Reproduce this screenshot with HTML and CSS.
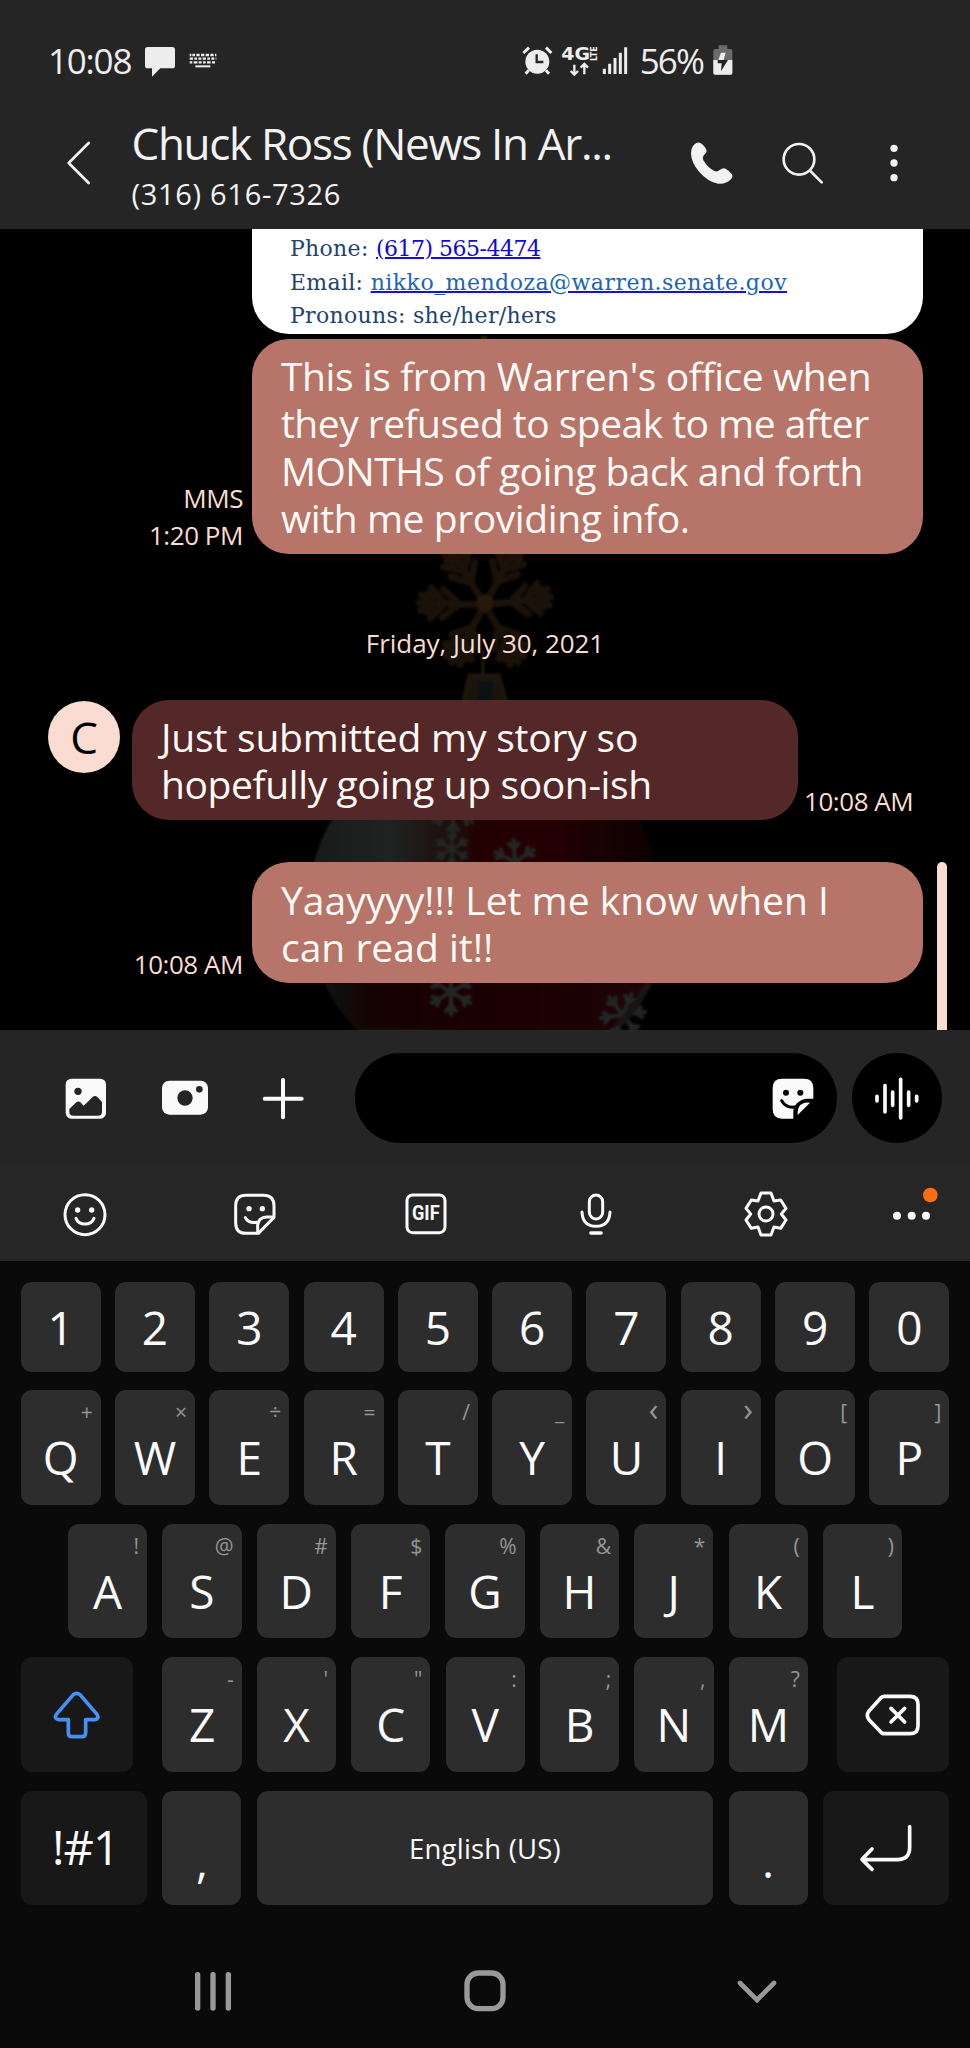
FILE: index.html
```html
<!DOCTYPE html>
<html lang="en">
<head>
<meta charset="utf-8">
<title>Messages</title>
<link rel="stylesheet" href="styles.css">
</head>
<body>
<div class="phone">
  <div class="status">
    <span class="time">10:08</span>
    <svg class="s-chat" width="30" height="40" viewBox="435 120 90 120"><path d="M443 141H517Q525 141 525 149V197Q525 205 517 205H481L456 230V205H443Q435 205 435 197V149Q435 141 443 141Z" fill="#ededed"/></svg>
    <svg class="s-kb" width="28" height="40" viewBox="566 120 84 120"><g stroke="#ededed" stroke-width="7" fill="none"><path d="M568 165H648" stroke-dasharray="5 3 8 4 10 4 10 4 10 4 10 4"/><path d="M568 176H648" stroke-dasharray="10 4 8 4 9 4"/><path d="M568 187H648" stroke-dasharray="8 4 11 4 9 4"/><path d="M585 199H630" stroke-width="6"/></g></svg>
    <svg class="s-net" width="107" height="40" viewBox="110 120 321 120">
      <g fill="none" stroke="#ededed">
        <circle cx="156" cy="185" r="36" fill="#ededed" stroke="none"/>
        <path d="M114 159L131 143M182 143L198 159" stroke-width="9"/>
        <path d="M130 211L121 221M182 211L191 221" stroke-width="9"/>
        <path d="M154 163V186H174" stroke="#252525" stroke-width="7"/>
        <path d="M267 194V221M256 213L267 224L278 213M297 223V194M286 203L297 192L308 203" stroke-width="7"/>
        <g stroke-width="9"><path d="M357 206V222M373 191V222M389 174V222M405 158V222M421 142V222"/></g>
      </g>
      <text class="g4" x="228" y="181" textLength="86" lengthAdjust="spacingAndGlyphs">4G</text>
      <text class="lte" transform="translate(334 183) rotate(-90)" textLength="44" lengthAdjust="spacingAndGlyphs">LTE</text>
    </svg>
    <span class="pct">56%</span>
    <svg width="20" height="40" viewBox="683 120 60 120"><path d="M700 136H726V147H736Q741 147 741 152V219Q741 224 736 224H689Q684 224 684 219V152Q684 147 689 147H700Z" fill="#6b6b6b"/><path d="M684 180H741V219Q741 224 736 224H689Q684 224 684 219Z" fill="#ededed"/><path d="M707 158H721L715 180H699Z" fill="#ededed"/><path d="M697 180H728L707 214L709 190H697Z" fill="#252525"/></svg>
  </div>

  <div class="header">
    <svg class="back" width="28" height="47" viewBox="193 420 84 141"><path d="M264 429L204 489L264 549" fill="none" stroke="#f2f2f2" stroke-width="8" stroke-linecap="round" stroke-linejoin="round"/></svg>
    <div class="who"><div class="name">Chuck Ross (News In Ar...</div><div class="num">(316) 616-7326</div></div>
    <svg class="call" width="44" height="47" viewBox="615 420 132 141"><path d="M627 434Q640 422 651 432Q660 440 664 449Q667 455 659 463Q650 472 656 482Q668 502 688 513Q697 517 704 510Q714 502 722 506Q734 513 741 523Q745 530 738 538Q722 554 699 551Q669 546 643 516Q619 488 618 461Q618 444 627 434Z" fill="#f2f2f2"/></svg>
    <svg class="find" width="44" height="47" viewBox="890 420 132 141"><g fill="none" stroke="#f2f2f2" stroke-width="8" stroke-linecap="round"><circle cx="944" cy="478" r="46"/><path d="M978 513L1012 547"/></g></svg>
    <svg class="more" width="12" height="47" viewBox="1209 420 36 141"><g fill="#f2f2f2"><circle cx="1227" cy="445" r="11"/><circle cx="1227" cy="489" r="11"/><circle cx="1227" cy="533" r="11"/></g></svg>
  </div>

  <div class="chat">
    <svg class="wall" width="970" height="801" viewBox="0 229 970 801">
      <defs>
        <linearGradient id="ball" x1="310" y1="0" x2="662" y2="0" gradientUnits="userSpaceOnUse"><stop offset="0" stop-color="#191b1b"/><stop offset=".22" stop-color="#202222"/><stop offset=".4" stop-color="#1d100d"/><stop offset=".48" stop-color="#220101"/><stop offset=".68" stop-color="#250003"/><stop offset=".82" stop-color="#180204"/><stop offset="1" stop-color="#0a0102"/></linearGradient>
        <linearGradient id="low" x1="330" y1="0" x2="650" y2="0" gradientUnits="userSpaceOnUse"><stop offset="0" stop-color="#101010"/><stop offset=".12" stop-color="#150303"/><stop offset=".6" stop-color="#1d0002"/><stop offset="1" stop-color="#1d0508"/></linearGradient>
        <clipPath id="bottom"><rect x="300" y="930" width="380" height="100"/></clipPath>
        <filter id="soft" x="-10%" y="-10%" width="120%" height="120%" color-interpolation-filters="sRGB"><feGaussianBlur stdDeviation="1.3"/></filter>
        <g id="flake" fill="none" stroke="#232626" stroke-width="4"><g id="arm"><path d="M0 0V-24M-6 -20L0 -13L6 -20"/></g><use href="#arm" transform="rotate(60)"/><use href="#arm" transform="rotate(120)"/><use href="#arm" transform="rotate(180)"/><use href="#arm" transform="rotate(240)"/><use href="#arm" transform="rotate(300)"/></g>
        <g id="twig" fill="none" stroke-linecap="round"><path d="M0 0V-66M0 -40L-15 -54M0 -40L15 -54M0 -52L-8 -64M0 -52L8 -64M0 -26L-14 -42M0 -26L14 -42M-7 -46L-9 -58M7 -46L9 -58"/></g>
      </defs>
      <g filter="url(#soft)">
        <g transform="translate(485 605)" stroke="#1a1109" stroke-width="7"><use href="#twig" transform="rotate(28)"/><use href="#twig" transform="rotate(-32)"/><use href="#twig" transform="rotate(83)"/><use href="#twig" transform="rotate(-88)"/><use href="#twig" transform="rotate(150)"/><use href="#twig" transform="rotate(-150)"/></g>
        <path d="M484 336V345" stroke="#2a2308" stroke-width="7"/>
        <circle cx="485" cy="603" r="9" fill="#26180a"/>
        <path d="M483 650V674M469 675H499L507 702H463Z" stroke="#20180c" stroke-width="3" fill="#1b140b"/>
        <rect x="478" y="681" width="15" height="19" fill="#0a1213"/>
        <circle cx="485" cy="908" r="177" fill="url(#ball)"/>
        <circle cx="485" cy="908" r="177" fill="url(#low)" clip-path="url(#bottom)"/>
        <use href="#flake" transform="translate(453 811)"/><use href="#flake" transform="translate(452 849) scale(.75)"/>
        <use href="#flake" transform="translate(515 862) rotate(-4)"/>
        <use href="#flake" transform="translate(451 992)"/>
        <use href="#flake" transform="translate(623 1015) rotate(22)"/>
        <path d="M654 970Q642 1002 618 1026" stroke="#1b1415" stroke-width="7" fill="none"/>
      </g>
    </svg>

    <div class="row out">
      <div class="card">
        <div class="l1">Phone: <a class="tel">(617) 565-4474</a></div>
        <div class="l2">Email: <a class="mail">nikko_mendoza@warren.senate.gov</a></div>
        <div class="l3">Pronouns: she/her/hers</div>
      </div>
    </div>
    <div class="row out r1">
      <div class="meta">MMS<br>1:20 PM</div>
      <div class="bubble sent"><div class="snug1">This is from Warren's office when</div><div class="snug2">they refused to speak to me after</div><div class="snug2">MONTHS of going back and forth</div><div class="snug1">with me providing info.</div></div>
    </div>
    <div class="date">Friday, July 30, 2021</div>
    <div class="row in">
      <div class="avatar">C</div>
      <div class="bubble two got"><div class="loose">Just submitted my story so</div><div>hopefully going up soon-ish</div></div>
      <div class="meta left">10:08 AM</div>
    </div>
    <div class="row out r3">
      <div class="meta">10:08 AM</div>
      <div class="bubble two sent wide"><div>Yaayyyy!!! Let me know when I</div><div>can read it!!</div></div>
    </div>
    <div class="scroll"></div>
  </div>

  <div class="composer">
    <svg class="c-img" width="42" height="50" viewBox="195 160 126 150"><rect x="197" y="177" width="121" height="120" rx="17" fill="#fafafa"/><circle cx="234" cy="215" r="11" fill="#252525"/><path d="M208 268L229 248Q235 243 241 248L251 258L278 232Q285 226 292 232L306 247V276Q306 288 294 288H220Q208 288 208 276Z" fill="#252525"/></svg>
    <svg class="c-cam" width="48" height="50" viewBox="482 160 144 150"><rect x="485" y="183" width="138" height="102" rx="22" fill="#fafafa"/><circle cx="554" cy="235" r="23" fill="#252525"/><circle cx="597" cy="209" r="10" fill="#252525"/></svg>
    <svg class="c-add" width="42" height="50" viewBox="787 160 126 150"><path d="M795 237H906M850 181V293" stroke="#fafafa" stroke-width="12" stroke-linecap="round"/></svg>
    <div class="input">
      <svg width="42" height="50" viewBox="860 160 126 150"><path d="M890 177H956Q984 177 984 205V237H968Q947 237 935 251Q924 262 924 277V297H890Q862 297 862 269V205Q862 177 890 177Z" fill="#fafafa"/><circle cx="902" cy="219" r="9"/><circle cx="945" cy="219" r="9"/><path d="M889 243Q904 268 934 261" fill="none" stroke="#000" stroke-width="9" stroke-linecap="round"/><path d="M974 249Q957 247 945 256Q936 265 937 286Z" fill="#fafafa"/></svg>
    </div>
    <div class="voice"><svg width="46" height="50" viewBox="1167 160 138 150"><path d="M1176 230V244M1200 198V277M1223 217V257M1247 179V295M1271 217V257M1295 230V244" stroke="#fafafa" stroke-width="11" stroke-linecap="round"/></svg></div>
  </div>

  <div class="tools">
    <svg width="46" height="54" viewBox="187 500 138 162"><g fill="none" stroke="#fafafa" stroke-width="9" stroke-linecap="round"><circle cx="256" cy="583" r="60"/><path d="M229 594Q236 611 256 611Q276 611 283 594"/></g><circle cx="234" cy="569" r="8" fill="#fafafa"/><circle cx="276" cy="569" r="8" fill="#fafafa"/></svg>
    <svg width="46" height="54" viewBox="697 500 138 162"><g fill="none" stroke="#fafafa" stroke-width="9" stroke-linecap="round" stroke-linejoin="round"><path d="M739 525H791Q823 525 823 557V591L776 639H739Q708 639 708 607V557Q708 525 739 525Z"/><path d="M774 637V614Q777 591 801 590H821M737 592Q747 610 771 606"/></g><circle cx="748" cy="565" r="8" fill="#fafafa"/><circle cx="788" cy="565" r="8" fill="#fafafa"/></svg>
    <svg width="46" height="54" viewBox="1208 500 138 162"><rect x="1220" y="524" width="114" height="113" rx="17" fill="none" stroke="#fafafa" stroke-width="9"/><text class="gif" x="1235" y="600" textLength="83" lengthAdjust="spacingAndGlyphs">GIF</text></svg>
    <svg width="46" height="54" viewBox="266 500 138 162"><g fill="none" stroke="#fafafa" stroke-width="9" stroke-linecap="round"><rect x="315" y="524" width="40" height="72" rx="20"/><path d="M293 575Q295 618 335 618Q375 618 377 575"/><path d="M320 638H350" stroke-width="11"/></g></svg>
    <svg width="46" height="54" viewBox="775 500 138 162"><g fill="none" stroke="#fafafa" stroke-width="9" stroke-linejoin="round"><path d="M829 518H859L868 542L888 539L904 564L890 581L904 599L888 624L868 620L859 644H829L820 620L800 624L784 599L798 581L784 564L800 539L820 542Z"/><circle cx="844" cy="581" r="21"/></g></svg>
    <svg class="dots" width="46" height="54" viewBox="1221 500 138 162"><g fill="#fafafa"><circle cx="1236" cy="586" r="12"/><circle cx="1280" cy="586" r="12"/><circle cx="1323" cy="586" r="12"/></g><circle cx="1336" cy="524" r="22" fill="#fb6d12"/></svg>
  </div>

  <div class="keys">
    <div class="krow nums"><div class="key">1</div><div class="key">2</div><div class="key">3</div><div class="key">4</div><div class="key">5</div><div class="key">6</div><div class="key">7</div><div class="key">8</div><div class="key">9</div><div class="key">0</div></div>
    <div class="krow"><div class="key">Q<i>+</i></div><div class="key">W<i>×</i></div><div class="key">E<i>÷</i></div><div class="key">R<i>=</i></div><div class="key">T<i>/</i></div><div class="key">Y<i>_</i></div><div class="key">U<i class="angle">‹</i></div><div class="key">I<i class="angle">›</i></div><div class="key">O<i>[</i></div><div class="key">P<i>]</i></div></div>
    <div class="krow mid"><div class="key">A<i>!</i></div><div class="key">S<i>@</i></div><div class="key">D<i>#</i></div><div class="key">F<i>$</i></div><div class="key">G<i>%</i></div><div class="key">H<i>&amp;</i></div><div class="key">J<i>*</i></div><div class="key">K<i>(</i></div><div class="key">L<i>)</i></div></div>
    <div class="krow low">
      <div class="key dark shift"><svg width="48" height="50" viewBox="159 149 144 150"><path d="M220 163Q230 155 240 163L291 222Q299 236 284 238H257V277Q257 289 246 289H216Q205 289 205 277V238H177Q161 236 169 222Z" fill="none" stroke="#4690f7" stroke-width="11" stroke-linejoin="round"/></svg></div>
      <div class="key">Z<i>-</i></div><div class="key">X<i>'</i></div><div class="key">C<i>"</i></div><div class="key">V<i>:</i></div><div class="key">B<i>;</i></div><div class="key">N<i>,</i></div><div class="key">M<i>?</i></div>
      <div class="key dark del"><svg width="56" height="50" viewBox="1141 149 168 150"><g fill="none" stroke="#fafafa" stroke-width="11" stroke-linecap="round" stroke-linejoin="round"><path d="M1199 168H1276Q1300 168 1300 192V256Q1300 280 1276 280H1199Q1193 280 1189 276L1153 238Q1143 225 1153 212L1189 172Q1193 168 1199 168Z"/><path d="M1219 204L1260 245M1260 204L1219 245"/></g></svg></div>
    </div>
    <div class="krow last">
      <div class="key dark sym">!#1</div><div class="key punct">,</div><div class="key space">English (US)</div><div class="key punct">.</div>
      <div class="key dark enter"><svg width="54" height="50" viewBox="1123 549 162 150"><path d="M1275 560V622Q1275 659 1238 659H1134M1162 627L1132 658L1162 688" fill="none" stroke="#fafafa" stroke-width="11" stroke-linecap="round" stroke-linejoin="round"/></svg></div>
    </div>
  </div>

  <div class="nav">
    <svg width="42" height="44" viewBox="577 986 126 132"><path d="M594 1003V1103M640 1003V1103M686 1003V1103" stroke="#999" stroke-width="16" stroke-linecap="round"/></svg>
    <svg width="44" height="44" viewBox="1389 986 132 132"><rect x="1401" y="998" width="108" height="107" rx="34" fill="none" stroke="#999" stroke-width="16"/></svg>
    <svg width="42" height="44" viewBox="752 986 126 132"><path d="M764 1028L815 1079L866 1028" fill="none" stroke="#999" stroke-width="14" stroke-linecap="round"/></svg>
  </div>
</div>
</body>
</html>
```
FILE: styles.css
```css
* { box-sizing: border-box; }
body { margin: 0; background: #0a0a0a; font-family: "Open Sans", "Noto Sans", sans-serif; }
svg { display: block; flex: none; }
.phone { width: 970px; height: 2048px; display: flex; flex-direction: column; overflow: hidden; white-space: nowrap; }

.status { height: 114px; padding: 40px 0 0 48px; display: flex; background: #252525; color: #ededed; font-size: 35px; line-height: 42px; }
.time { width: 97px; letter-spacing: -1.2px; }
.s-kb { margin-left: 13.7px; }
.s-net { margin-left: 305px; }
.pct { width: 73.7px; margin-left: 11px; letter-spacing: -1.9px; }
.g4 { font: bold 54px "DejaVu Sans", sans-serif; fill: #ededed; }
.lte { font: bold 24px "DejaVu Sans", sans-serif; fill: #ededed; }

.header { height: 115px; padding-left: 64.5px; display: flex; background: #252525; color: #f2f2f2; }
.header svg { margin-top: 26px; }
.who { width: 557px; margin-left: 39px; }
.name { font-size: 44px; line-height: 56px; margin-top: 1px; letter-spacing: -1.3px; }
.num { font-size: 29px; line-height: 36px; margin-top: 5px; letter-spacing: .7px; }
.call { margin-left: 1px; }
.find { margin-left: 47.7px; }
.more { margin-left: 62.5px; }

.chat { position: relative; height: 801px; background: #000; overflow: hidden; }
.wall { position: absolute; left: 0; top: 0; }
.row { position: relative; display: flex; align-items: flex-end; }
.out { justify-content: flex-end; padding-right: 47px; }
.card { width: 671px; height: 105px; padding: 3px 0 0 38px; background: #fff; border-radius: 0 0 37px 37px; color: #23426f; font-family: "DejaVu Serif", serif; font-size: 22px; line-height: 33.7px; letter-spacing: .3px; }
.card a { text-decoration: underline; text-decoration-color: #1a10d8; text-decoration-thickness: 2px; }
.tel { color: #1208d0; letter-spacing: -.5px; }
.mail { color: #1a66b4; letter-spacing: .48px; }
.r1 { margin-top: 4.5px; }
.bubble { padding: 13.3px 0 12px 29px; border-radius: 37px; color: #fffaf7; font-size: 39px; font-weight: 420; line-height: 47.5px; letter-spacing: -.4px; }
.two { padding: 13.3px 0 12.3px 29px; }
.wide { letter-spacing: 0; }
.loose { letter-spacing: -.2px; }
.snug1 { letter-spacing: -.42px; }
.snug2 { letter-spacing: -.53px; }
.sent { width: 671px; background: #b67568; }
.got { width: 666px; margin-left: 12px; background: #542828; }
.meta { margin-right: 9px; color: #fadcd1; font-size: 26px; line-height: 37px; letter-spacing: -.45px; text-align: right; }
.r1 .meta { margin-bottom: -.6px; }
.left { margin: 0 0 0 6px; }
.date { position: relative; margin-top: 71.5px; height: 36px; text-align: center; color: #fadcd1; font-size: 26px; line-height: 36px; letter-spacing: -.05px; }
.in { margin-top: 38.4px; padding-left: 48px; }
.avatar { width: 72px; height: 72px; align-self: flex-start; margin-top: 1.5px; border-radius: 50%; background: #fadcd1; color: #000; font-size: 44px; line-height: 72px; text-align: center; }
.r3 { margin-top: 42px; }
.scroll { position: absolute; left: 937px; top: 633px; width: 10px; height: 180px; border-radius: 5px; background: #fadcd1; }

.composer { height: 135px; padding: 23px 0 0 65px; display: flex; background: #252525; }
.composer > svg { margin-top: 20.3px; }
.c-cam { margin-left: 53.7px; }
.c-add { margin-left: 53.6px; }
.input { width: 482px; height: 90px; margin-left: 51px; padding: 20px 0 0 416.5px; border-radius: 45px; background: #000; }
.voice { width: 90px; height: 90px; margin-left: 14.5px; padding: 20px 0 0 22.3px; border-radius: 50%; background: #000; }

.tools { height: 96px; padding-top: 1px; display: grid; grid-template-columns: repeat(5, 170.3px) 1fr; align-items: center; justify-items: center; background: #262626; }
.dots { margin-left: 8px; }
.gif { font: bold 58px Roboto, sans-serif; fill: #fafafa; }

.keys { height: 644px; padding: 21px 20.7px 0; display: flex; flex-direction: column; gap: 18.8px; color: #fafafa; }
.krow { display: flex; gap: 14.3px; height: 115px; }
.key { position: relative; flex: 1; min-width: 0; border-radius: 11px; background: #2d2d2d; font-size: 46px; font-weight: 420; line-height: 135px; text-align: center; }
.nums { height: 89.5px; }
.nums .key { line-height: 90px; }
.key i { position: absolute; right: 8px; top: 7px; font-style: normal; font-size: 21px; line-height: 30px; color: #969696; }
.key .angle { font-size: 32px; top: 4px; }
.mid { height: 114px; padding: 0 47.3px; gap: 15.2px; }
.low, .last { gap: 15.2px; }
.low .key { flex: none; width: 79.2px; }
.key.dark { background: #181818; flex: none; display: flex; justify-content: center; }
.low .shift { width: 112.6px; margin-right: 14px; padding-top: 33px; }
.low .del { width: 112.3px; margin-left: 13.8px; padding-top: 33px; }
.last { height: 114px; }
.last .sym { width: 126.5px; padding-left: 3px; font-size: 47px; font-weight: 480; line-height: 112px; letter-spacing: -1px; }
.last .punct { flex: none; width: 79px; font-weight: 500; line-height: 138px; }
.last .space { font-size: 27.5px; font-weight: 400; line-height: 115px; letter-spacing: .2px; }
.last .enter { width: 126.5px; padding-top: 32px; }

.nav { height: 143px; padding: 64px 77.5px 0; display: grid; grid-template-columns: repeat(3, 1fr); justify-items: center; align-items: start; }
```
